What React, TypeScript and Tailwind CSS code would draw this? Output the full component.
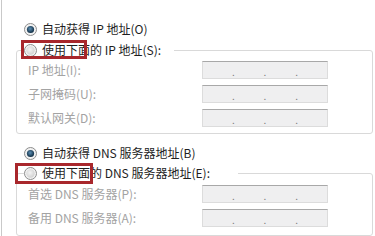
import React from "react";

function Radio({ checked }: { checked: boolean }) {
  return (
    <svg width="13" height="13" viewBox="0 0 13 13" className="shrink-0">
      <defs>
        <radialGradient id={checked ? "rgOn" : "rgOff"} cx="0.45" cy="0.4" r="0.6">
          <stop offset="0" stopColor={checked ? "#5d8fb4" : "#f4f4f4"} />
          <stop offset="1" stopColor={checked ? "#0d2a40" : "#d2d2d2"} />
        </radialGradient>
      </defs>
      <circle cx="6.5" cy="6.5" r="6" fill="#f2f2f2" stroke="#8c8c8c" strokeWidth="1" />
      <circle cx="6.5" cy="6.5" r={checked ? 3.6 : 4.2} fill={`url(#${checked ? "rgOn" : "rgOff"})`} />
    </svg>
  );
}

function IpBox() {
  return (
    <div className="w-[126px] h-[18px] bg-[#efeff0] border border-[#dcdcdc] border-t-[#a8a8a8] flex justify-evenly items-end pb-[1px]">
      <span className="text-[10px] leading-[10px] text-[#7a7a7a]">.</span>
      <span className="text-[10px] leading-[10px] text-[#7a7a7a]">.</span>
      <span className="text-[10px] leading-[10px] text-[#7a7a7a]">.</span>
    </div>
  );
}

function Row({ label }: { label: string }) {
  return (
    <div className="flex items-center h-[18px]">
      <span className="w-[185px] pl-[11px] text-[#a3a3a3] leading-[18px]">{label}</span>
      <IpBox />
    </div>
  );
}

function RadioLine({ checked, text }: { checked: boolean; text: string }) {
  return (
    <div className="flex items-center h-[16px] gap-[5px] text-[#1e1e1e] leading-[16px] whitespace-nowrap">
      <Radio checked={checked} />
      <span>{text}</span>
    </div>
  );
}

export default function App() {
  return (
    <div className="relative w-[375px] h-[236px] bg-white overflow-hidden text-[12px] font-['Noto_Sans_CJK_SC','Noto_Sans',sans-serif]">
      <div className="ml-[1px] h-full border-l border-[#c9c9c9] pt-[21px]">
        <div className="pl-[22px]">
          <RadioLine checked={true} text="自动获得 IP 地址(O)" />
        </div>
        <fieldset className="ml-[14px] mt-[5px] w-[357px] border border-[#d9d9d9] rounded-[3px] pb-[6px]">
          <legend className="ml-[7px] w-[150px] px-0">
            <RadioLine checked={false} text="使用下面的 IP 地址(S):" />
          </legend>
          <div className="flex flex-col gap-[6px] pt-[3px]">
            <Row label="IP 地址(I):" />
            <Row label="子网掩码(U):" />
            <Row label="默认网关(D):" />
          </div>
        </fieldset>
        <div className="pl-[22px] mt-[11px]">
          <RadioLine checked={true} text="自动获得 DNS 服务器地址(B)" />
        </div>
        <fieldset className="ml-[14px] mt-[4px] w-[357px] border border-[#d9d9d9] rounded-[3px] pb-[8px]">
          <legend className="ml-[7px] w-[214px] px-0">
            <RadioLine checked={false} text="使用下面的 DNS 服务器地址(E):" />
          </legend>
          <div className="flex flex-col gap-[6px] pt-[4px]">
            <Row label="首选 DNS 服务器(P):" />
            <Row label="备用 DNS 服务器(A):" />
          </div>
        </fieldset>
      </div>
      <div className="absolute left-[21px] top-[40px] w-[66px] h-[19px] border-[3px] border-[#a8272c]" />
      <div className="absolute left-[15px] top-[163px] w-[78px] h-[21px] border-[3px] border-[#a8272c]" />
    </div>
  );
}
